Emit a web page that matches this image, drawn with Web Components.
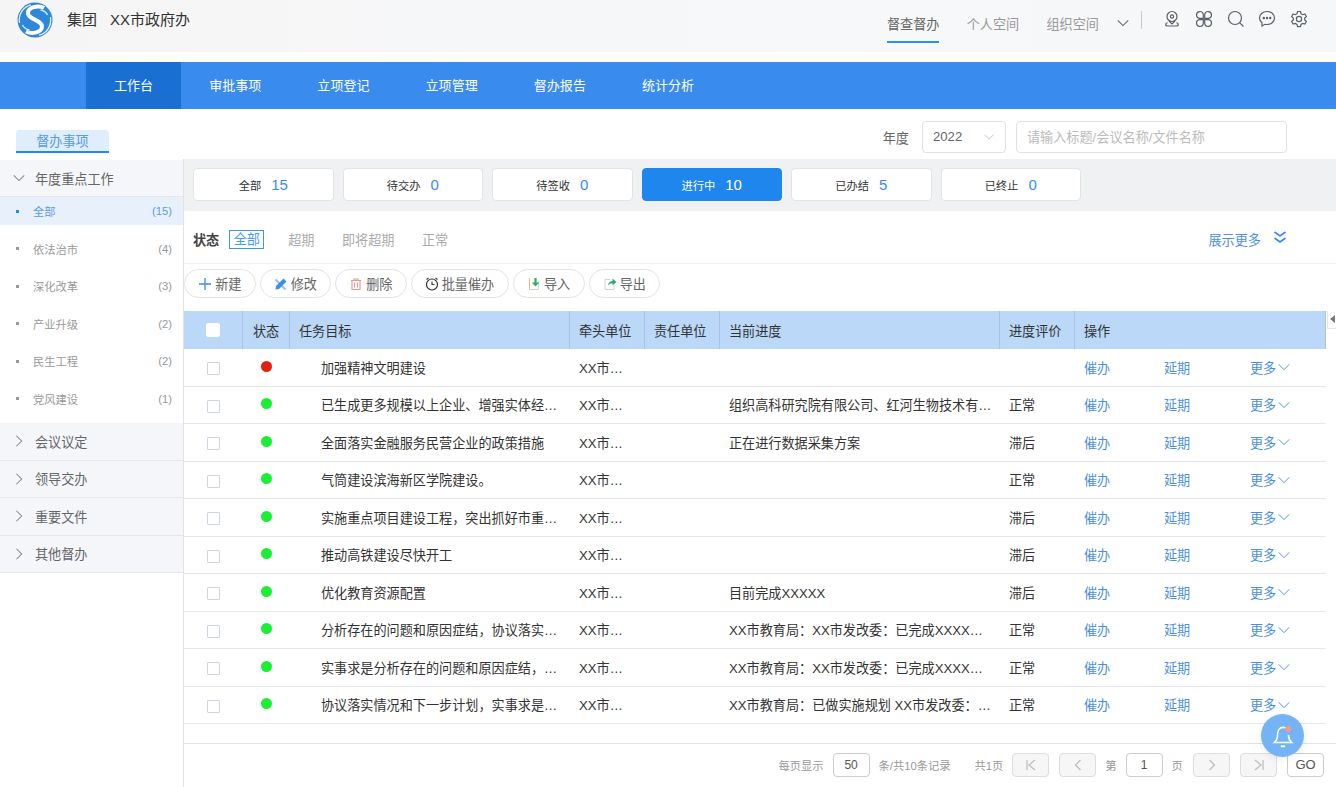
<!DOCTYPE html>
<html lang="zh-CN">
<head>
<meta charset="utf-8">
<title>督查督办</title>
<style>
  html, body { margin: 0; height: 100%; overflow: hidden; background: #fff; }
  body { font-family: "Liberation Sans", "Noto Sans CJK SC", sans-serif; color: #333; }
  #page { display: flex; flex-direction: column; height: 787px; }
</style>
</head>
<body>
<div id="page">
  <app-header></app-header>
  <app-nav></app-nav>
  <sub-bar></sub-bar>
  <work-area>
    <side-menu slot="side"></side-menu>
    <status-cards></status-cards>
    <filter-bar></filter-bar>
    <tool-bar></tool-bar>
    <data-table></data-table>
    <pager-bar></pager-bar>
  </work-area>
</div>
<bell-fab></bell-fab>

<script>
const chevron = (dir, size, color, width = 1.2) => {
    const paths = { down: 'M2 5l6 6 6-6', right: 'M5 2l6 6-6 6', left: 'M11 2L5 8l6 6' };
    return `<svg width="${size}" height="${size}" viewBox="0 0 16 16" fill="none" stroke="${color}" stroke-width="${width}"><path d="${paths[dir]}"/></svg>`;
};

class AppHeader extends HTMLElement {
    constructor() {
        super();
        this.attachShadow({ mode: 'open' });
    }

    connectedCallback() {
        const icon = inner => `<svg width="18" height="18" viewBox="0 0 18 18" fill="none" stroke="#5b6068" stroke-width="1.2">${inner}</svg>`;
        this.shadowRoot.innerHTML = `
            <style>
                :host {
                    display: flex;
                    align-items: stretch;
                    height: 52px;
                    margin-bottom: 10px;
                    padding: 0 28px 0 17px;
                    box-sizing: border-box;
                    background: linear-gradient(90deg, #f5f5f6, #f7f8f9 60%, #f6f7f8);
                    font-size: 15px;
                    color: #333;
                }
                .logo { margin-top: 2px; }
                .brand { display: flex; gap: 13px; margin: 10px 0 0 14px; line-height: 20px; height: 20px; }
                .spacer { flex: 1; }
                .tabs { display: flex; align-items: flex-start; gap: 27.3px; font-size: 13.13px; color: #999; }
                .tab { height: 41px; line-height: 50px; }
                .tab.on { color: #666; border-bottom: 2px solid #2a92ee; }
                .more { margin: 16px 0 0 17px; height: 14px; }
                .sep { width: 1px; height: 18px; margin: 11px 21px 0 11px; background: #c8c8c8; }
                .icons { display: flex; gap: 13.75px; margin-top: 10px; height: 18px; }
            </style>
            <svg class="logo" width="36" height="36" viewBox="0 0 36 36" fill="none">
                <circle cx="18" cy="18" r="17.5" fill="#2f87da"/>
                <path d="M27 6C21 2.500 10.500 5.500 11 11.500 11.500 17.500 25 18 25 24.500 25 30.500 15 32.500 9 29.500" stroke="#fff" stroke-width="4"/>
                <path d="M2.500 21C1 11.500 7 4.500 14 2.800" stroke="#e4f1fc" stroke-width="1.300"/>
                <path d="M33.500 15C35 24.500 29 31.500 22 33.200" stroke="#e4f1fc" stroke-width="1.300"/>
                <path d="M5.500 23c1.500 3 4 4.500 7 5" stroke="#cfe5f8" stroke-width="1.500"/>
                <path d="M30.500 13c-1.500-3-4-4.500-7-5" stroke="#cfe5f8" stroke-width="1.500"/>
            </svg>
            <div class="brand"><span>集团</span><span>XX市政府办</span></div>
            <div class="spacer"></div>
            <div class="tabs">
                <div class="tab on">督查督办</div>
                <div class="tab">个人空间</div>
                <div class="tab">组织空间</div>
            </div>
            <div class="more">${chevron('down', 14, '#666')}</div>
            <div class="sep"></div>
            <div class="icons">
                ${icon('<circle cx="9" cy="6.5" r="5"/><circle cx="9" cy="6.5" r="1.6"/><path d="M6 11l3 3 3-3"/><path d="M4.5 12.5C2 13.5 2 16 5 16h8c3 0 3-2.500.5-3.500"/>')}
                ${icon('<path d="M8.300 8.300H4.500A3.400 3.400 0 1 1 8.300 4.500zM9.700 8.300V4.500A3.400 3.400 0 1 1 13.500 8.300zM8.300 9.700v3.800A3.400 3.400 0 1 1 4.500 9.700zM9.700 9.700h3.800A3.400 3.400 0 1 1 9.700 13.500z"/>')}
                ${icon('<circle cx="8" cy="8" r="6.5"/><path d="M12.800 12.800L16.500 16.500"/>')}
                ${icon('<path d="M9 1.500C4.500 1.500 1.500 4.500 1.500 8c0 2 1 3.700 2.500 4.800V16l3-1.700c.6.1 1.300.2 2 .2 4.500 0 7.500-3 7.500-6.500s-3-6.500-7.500-6.500z"/><circle cx="5.800" cy="8" r=".6" fill="#5b6068"/><circle cx="9" cy="8" r=".6" fill="#5b6068"/><circle cx="12.200" cy="8" r=".6" fill="#5b6068"/>')}
                ${icon('<path d="M7.500 1.500h3l.5 2.200 1.700 1 2.200-.7 1.500 2.600-1.700 1.500v1.900l1.700 1.500-1.500 2.600-2.200-.7-1.700 1-.5 2.200h-3l-.5-2.200-1.700-1-2.200.7-1.500-2.600 1.700-1.500V8.100L1.600 6.600l1.500-2.600 2.200.7 1.700-1z"/><circle cx="9" cy="9" r="2.600"/>')}
            </div>
        `;
    }
}

class AppNav extends HTMLElement {
    constructor() {
        super();
        this.attachShadow({ mode: 'open' });
    }

    connectedCallback() {
        const items = ['工作台', '审批事项', '立项登记', '立项管理', '督办报告', '统计分析'];
        this.shadowRoot.innerHTML = `
            <style>
                :host {
                    display: flex;
                    height: 47px;
                    padding-left: 86px;
                    background: #3a8bee;
                    color: #fff;
                    font-size: 13.06px;
                    line-height: 47px;
                }
                div { padding: 0 28px; }
                .on { background: #1a6fd3; }
            </style>
            ${items.map((item, i) => `<div class="${i === 0 ? 'on' : ''}">${item}</div>`).join('')}
        `;
    }
}

class SubBar extends HTMLElement {
    constructor() {
        super();
        this.attachShadow({ mode: 'open' });
    }

    connectedCallback() {
        this.shadowRoot.innerHTML = `
            <style>
                :host {
                    display: flex;
                    align-items: flex-end;
                    height: 50px;
                    padding: 0 49px 6px 16px;
                    box-sizing: border-box;
                    font-size: 13.13px;
                    color: #666;
                }
                .tab {
                    width: 93px;
                    height: 23px;
                    box-sizing: border-box;
                    border-bottom: 2px solid #1b8cf2;
                    border-radius: 4px 4px 0 0;
                    background: #deeefd;
                    color: #5a9ae6;
                    text-align: center;
                    line-height: 23px;
                }
                .spacer { flex: 1; }
                .label { margin-right: 13px; line-height: 29px; }
                .box {
                    height: 32px;
                    box-sizing: border-box;
                    border: 1px solid #e2e2e2;
                    border-radius: 4px;
                    line-height: 32px;
                    background: #fff;
                }
                .year { display: flex; justify-content: space-between; align-items: center; width: 84px; padding: 0 10px; margin-right: 10px; }
                .search { width: 271px; padding-left: 10px; color: #bbb; }
            </style>
            <div class="tab">督办事项</div>
            <div class="spacer"></div>
            <div class="label">年度</div>
            <div class="box year"><span>2022</span>${chevron('down', 12, '#c4c4c4')}</div>
            <div class="box search">请输入标题/会议名称/文件名称</div>
        `;
    }
}

class WorkArea extends HTMLElement {
    constructor() {
        super();
        this.attachShadow({ mode: 'open' });
    }

    connectedCallback() {
        this.shadowRoot.innerHTML = `
            <style>
                :host {
                    display: flex;
                    flex: 1;
                    min-height: 0;
                }
                .side { width: 184px; flex: none; box-sizing: border-box; border-right: 1px solid #e3e3e6; }
                .main { flex: 1; min-width: 0; display: flex; flex-direction: column; position: relative; }
                .handle {
                    position: absolute;
                    top: 152px;
                    right: 0;
                    width: 9px;
                    height: 18px;
                    box-sizing: border-box;
                    border: 1px solid #e6e6e6;
                    border-width: 0 0 1px 1px;
                }
                .handle::after {
                    content: '';
                    position: absolute;
                    left: 2px;
                    top: 4px;
                    border: 4px solid transparent;
                    border-left: 0;
                    border-right: 5px solid #777;
                }
            </style>
            <div class="side"><slot name="side"></slot></div>
            <div class="main"><slot></slot><div class="handle"></div></div>
        `;
    }
}

class SideMenu extends HTMLElement {
    constructor() {
        super();
        this.attachShadow({ mode: 'open' });
    }

    connectedCallback() {
        const items = [['全部', 15], ['依法治市', 4], ['深化改革', 3], ['产业升级', 2], ['民生工程', 2], ['党风建设', 1]];
        const groups = ['会议议定', '领导交办', '重要文件', '其他督办'];
        this.shadowRoot.innerHTML = `
            <style>
                :host { display: block; padding-top: 1px; font-size: 13.13px; color: #666; }
                .group {
                    display: flex;
                    align-items: center;
                    gap: 9px;
                    height: 37.5px;
                    padding-left: 12px;
                    box-sizing: border-box;
                    background: #f4f6fa;
                    border-bottom: 1px solid #e4e6ea;
                }
                .group svg { flex: none; }
                .open { height: 37px; }
                .list { display: flex; flex-direction: column; gap: 9.5px; padding-bottom: 10.500px; }
                .item {
                    display: flex;
                    align-items: center;
                    height: 28px;
                    padding: 0 11px 0 16px;
                    font-size: 11.25px;
                    color: #999;
                }
                .item.on { background: #e8f1fb; color: #5a9ae6; }
                .item i { width: 3px; height: 3px; margin-right: 14px; background: #999; }
                .item.on i { background: #1b8cf2; }
                .item b { margin-left: auto; font-weight: 400; }
            </style>
            <div class="group open">${chevron('down', 14, '#888')}<span>年度重点工作</span></div>
            <div class="list">
                ${items.map(([name, count], i) => `<div class="item ${i === 0 ? 'on' : ''}"><i></i><span>${name}</span><b>(${count})</b></div>`).join('')}
            </div>
            ${groups.map(name => `<div class="group">${chevron('right', 14, '#888')}<span>${name}</span></div>`).join('')}
        `;
    }
}

class StatusCards extends HTMLElement {
    constructor() {
        super();
        this.attachShadow({ mode: 'open' });
    }

    connectedCallback() {
        const cards = [['全部', 15], ['待交办', 0], ['待签收', 0], ['进行中', 10], ['已办结', 5], ['已终止', 0]];
        this.shadowRoot.innerHTML = `
            <style>
                :host {
                    display: flex;
                    gap: 9px;
                    height: 52px;
                    padding: 9px 255px 10px 9px;
                    box-sizing: border-box;
                    background: #f0f1f3;
                }
                div {
                    flex: 1;
                    display: flex;
                    justify-content: center;
                    align-items: center;
                    gap: 10px;
                    box-sizing: border-box;
                    border: 1px solid #e3e3e3;
                    border-radius: 4px;
                    background: #fff;
                    font-size: 11.25px;
                    color: #333;
                }
                b { font-size: 15px; font-weight: 400; color: #3a8bee; }
                .on { background: #1f86ee; border-color: #1f86ee; color: #fff; }
                .on b { color: #fff; }
            </style>
            ${cards.map(([name, count], i) => `<div class="${i === 3 ? 'on' : ''}"><span>${name}</span><b>${count}</b></div>`).join('')}
        `;
    }
}

class FilterBar extends HTMLElement {
    constructor() {
        super();
        this.attachShadow({ mode: 'open' });
    }

    connectedCallback() {
        this.shadowRoot.innerHTML = `
            <style>
                :host {
                    display: flex;
                    align-items: center;
                    height: 53px;
                    padding: 4px 49px 0 9px;
                    box-sizing: border-box;
                    border-bottom: 1px solid #f0f0f0;
                    font-size: 13.13px;
                    color: #aaa;
                }
                b { margin-right: 10px; color: #444; font-weight: 700; font-size: 13.13px; }
                .on {
                    width: 35px;
                    height: 19px;
                    box-sizing: border-box;
                    border: 1px solid #3a97f0;
                    color: #4a9bee;
                    text-align: center;
                    line-height: 17px;
                    margin-right: 24px;
                }
                span { margin-right: 27.500px; }
                .more { margin: 0 12px 0 auto; color: #4a90e2; }
                svg { margin-top: -5px; }
            </style>
            <b>状态</b>
            <div class="on">全部</div>
            <span>超期</span><span>即将超期</span><span>正常</span>
            <span class="more">展示更多</span>
            <svg width="14" height="14" viewBox="0 0 14 14" fill="none" stroke="#3a8bee" stroke-width="1.800"><path d="M1.500 2L7 6l5.500-4M1.500 8L7 12l5.500-4"/></svg>
        `;
    }
}

class ToolBar extends HTMLElement {
    constructor() {
        super();
        this.attachShadow({ mode: 'open' });
    }

    connectedCallback() {
        const icon = inner => `<svg width="14" height="14" viewBox="0 0 14 14" fill="none">${inner}</svg>`;
        const buttons = [
            ['新建', 71.5, icon('<path d="M7 1v12M1 7h12" stroke="#3a8bee" stroke-width="1.300"/>')],
            ['修改', 71.5, icon('<path d="M1.500 2.500l10 10" stroke="#9cc6f4" stroke-width="2.400"/><path d="M9.500 1.500l3 3-7.500 7.500-3.500.5.500-3.500z" fill="#3f8fe6"/>')],
            ['删除', 71.5, icon('<path d="M2 3.500h10M5 3.500V2h4v1.500M3 3.500V12.500h8V3.500M5.500 5.500v5M8.500 5.500v5" stroke="#f0958a" stroke-width="1.100"/>')],
            ['批量催办', 98, icon('<circle cx="7" cy="7.500" r="5.500" stroke="#333" stroke-width="1.200"/><path d="M7 4.500v3h2.500M1.500 2.500L3.500 1M12.500 2.500L10.500 1" stroke="#333" stroke-width="1.100"/>')],
            ['导入', 72, icon('<path d="M2.500 1.500v11h9v-8" stroke="#c9d8cf" stroke-width="1"/><path d="M2.500 1.500v11" stroke="#e8b877" stroke-width="1"/><path d="M8.500 1v5" stroke="#37a868" stroke-width="2.200"/><path d="M4.800 5.500l3.700 4 3.700-4z" fill="#37a868"/>')],
            ['导出', 71.5, icon('<path d="M7 2.500H2v10h9V8.500" stroke="#c9d8cf" stroke-width="1"/><path d="M5 8.500c0-3 2.500-4.500 4.500-4.500V1.500L13.500 5l-4 3.500V6.300C7.500 6.300 6 7 5 8.500z" fill="#37a878"/>')]
        ];
        this.shadowRoot.innerHTML = `
            <style>
                :host {
                    display: flex;
                    gap: 4px;
                    height: 47px;
                    padding-top: 5px;
                    box-sizing: border-box;
                    font-size: 13.13px;
                    color: #666;
                }
                div {
                    display: flex;
                    justify-content: center;
                    align-items: center;
                    gap: 3px;
                    height: 29px;
                    box-sizing: border-box;
                    border: 1px solid #e3e3e3;
                    border-radius: 15px;
                    background: #fff;
                }
            </style>
            ${buttons.map(([name, width, svg]) => `<div style="width:${width}px">${svg}<span>${name}</span></div>`).join('')}
        `;
    }
}

class DataTable extends HTMLElement {
    constructor() {
        super();
        this.attachShadow({ mode: 'open' });
    }

    connectedCallback() {
        const rows = [
            ['r', '加强精神文明建设', '', ''],
            ['g', '已生成更多规模以上企业、增强实体经…', '组织高科研究院有限公司、红河生物技术有…', '正常'],
            ['g', '全面落实金融服务民营企业的政策措施', '正在进行数据采集方案', '滞后'],
            ['g', '气筒建设滨海新区学院建设。', '', '正常'],
            ['g', '实施重点项目建设工程，突出抓好市重…', '', '滞后'],
            ['g', '推动高铁建设尽快开工', '', '滞后'],
            ['g', '优化教育资源配置', '目前完成XXXXX', '滞后'],
            ['g', '分析存在的问题和原因症结，协议落实…', 'XX市教育局：XX市发改委：已完成XXXX…', '正常'],
            ['g', '实事求是分析存在的问题和原因症结，…', 'XX市教育局：XX市发改委：已完成XXXX…', '正常'],
            ['g', '协议落实情况和下一步计划，实事求是…', 'XX市教育局：已做实施规划 XX市发改委：…', '正常']
        ];
        this.shadowRoot.innerHTML = `
            <style>
                :host {
                    display: block;
                    margin-right: 10px;
                    font-size: 13.13px;
                    color: #333;
                }
                .row {
                    display: grid;
                    grid-template-columns: 59px 47px 280px 75px 75px 280px 75px 1fr;
                    height: 37.500px;
                    box-sizing: border-box;
                    align-items: center;
                    border-bottom: 1px solid #e6e7ea;
                }
                .row > div { padding-left: 9px; white-space: nowrap; overflow: hidden; }
                .head { height: 38px; background: #bbd8f8; border-bottom: 0; align-items: stretch; color: #333; }
                .head > div { display: flex; align-items: center; border-right: 1px solid #a9c4e2; }
                .row > .check { display: flex; justify-content: center; align-items: center; padding: 0; overflow: visible; }
                .row > .stat { display: flex; justify-content: center; padding: 0; overflow: visible; }
                .check i {
                    display: block;
                    width: 13px;
                    height: 13px;
                    margin-top: 3px;
                    box-sizing: border-box;
                    border: 1px solid #ccd5e0;
                    border-radius: 1px;
                    background: #fff;
                }
                .head .check i { width: 14px; height: 14px; margin-top: 0; border-color: #fff; border-radius: 2px; }
                .dot { width: 11px; height: 11px; margin-top: -2px; border-radius: 50%; }
                .r { background: #e0230f; }
                .g { background: #1cee35; }
                .row > .task { padding-left: 31px; }
                .ops { display: flex; color: #4a90e2; }
                .ops span:nth-child(1) { width: 80px; }
                .ops span:nth-child(2) { width: 86px; }
                .ops span:nth-child(3) { display: flex; align-items: center; gap: 1px; }
            </style>
            <div class="row head">
                <div class="check"><i></i></div>
                <div class="stat">状态</div>
                <div>任务目标</div>
                <div>牵头单位</div>
                <div>责任单位</div>
                <div>当前进度</div>
                <div>进度评价</div>
                <div>操作</div>
            </div>
            ${rows.map(([color, task, progress, grade]) => `
                <div class="row">
                    <div class="check"><i></i></div>
                    <div class="stat"><div class="dot ${color}"></div></div>
                    <div class="task">${task}</div>
                    <div>XX市…</div>
                    <div></div>
                    <div>${progress}</div>
                    <div>${grade}</div>
                    <div class="ops"><span>催办</span><span>延期</span><span>更多${chevron('down', 14, '#4a90e2', 1.1)}</span></div>
                </div>
            `).join('')}
        `;
    }
}

class PagerBar extends HTMLElement {
    constructor() {
        super();
        this.attachShadow({ mode: 'open' });
    }

    connectedCallback() {
        const arrows = { first: 'M4 3v10M12 3L6 8l6 5', prev: 'M10.500 3L5.500 8l5 5', next: 'M5.500 3l5 5-5 5', last: 'M4 3l6 5-6 5M12 3v10' };
        const btn = d => `<div class="btn"><svg width="16" height="16" viewBox="0 0 16 16" fill="none" stroke="#bbb" stroke-width="1.200"><path d="${d}"/></svg></div>`;
        this.shadowRoot.innerHTML = `
            <style>
                :host {
                    display: flex;
                    align-items: center;
                    justify-content: flex-end;
                    margin-top: auto;
                    height: 44px;
                    padding: 0 12px 2px 0;
                    box-sizing: border-box;
                    border-top: 1px solid #e3e3e6;
                    font-size: 11.25px;
                    color: #999;
                }
                .box, .btn {
                    display: flex;
                    justify-content: center;
                    align-items: center;
                    width: 37px;
                    height: 24px;
                    box-sizing: border-box;
                    border: 1px solid #ccc;
                    border-radius: 4px;
                    background: #fff;
                    color: #555;
                    font-size: 12px;
                }
                .btn { border-color: #ddd; background: #f6f6f6; }
                .go { font-size: 13px; margin-left: 10px; }
                .a { margin: 0 9px; }
                .t { margin: 0 9px; }
                .page { min-width: 12.500px; }
                .w { margin-right: 24px; }
                .gap { width: 10px; }
            </style>
            <span class="a">每页显示</span>
            <div class="box">50</div>
            <span class="a w">条/共10条记录</span>
            <span>共1页</span>
            <span class="gap" style="width:9px"></span>
            ${btn(arrows.first)}
            <span class="gap"></span>
            ${btn(arrows.prev)}
            <span class="t">第</span>
            <div class="box">1</div>
            <span class="t page">页</span>
            ${btn(arrows.next)}
            <span class="gap"></span>
            ${btn(arrows.last)}
            <div class="box go">GO</div>
        `;
    }
}

class BellFab extends HTMLElement {
    constructor() {
        super();
        this.attachShadow({ mode: 'open' });
    }

    connectedCallback() {
        this.shadowRoot.innerHTML = `
            <style>
                :host {
                    position: fixed;
                    left: 1261px;
                    top: 714px;
                    width: 43px;
                    height: 43px;
                    display: flex;
                    justify-content: center;
                    align-items: center;
                    border-radius: 50%;
                    background: #74b3f5;
                    box-shadow: 0 2px 8px rgba(0, 0, 0, 0.08);
                }
            </style>
            <svg width="26" height="26" viewBox="0 0 24 24" fill="none" stroke="#fff" stroke-width="1.500">
                <path d="M14.500 4.500C13.500 4 12.800 4 12 4 8.800 4 7 7 7 10.500c0 3.500-.8 5.500-3 7.500h16c-2-2-3-4-3-7"/>
                <path d="M10 21.500h4" stroke-width="1.800"/>
                <circle cx="17" cy="5.500" r="2.800" fill="#f5978c" stroke="none"/>
            </svg>
        `;
    }
}

customElements.define('app-header', AppHeader);
customElements.define('app-nav', AppNav);
customElements.define('sub-bar', SubBar);
customElements.define('work-area', WorkArea);
customElements.define('side-menu', SideMenu);
customElements.define('status-cards', StatusCards);
customElements.define('filter-bar', FilterBar);
customElements.define('tool-bar', ToolBar);
customElements.define('data-table', DataTable);
customElements.define('pager-bar', PagerBar);
customElements.define('bell-fab', BellFab);
</script>
</body>
</html>
